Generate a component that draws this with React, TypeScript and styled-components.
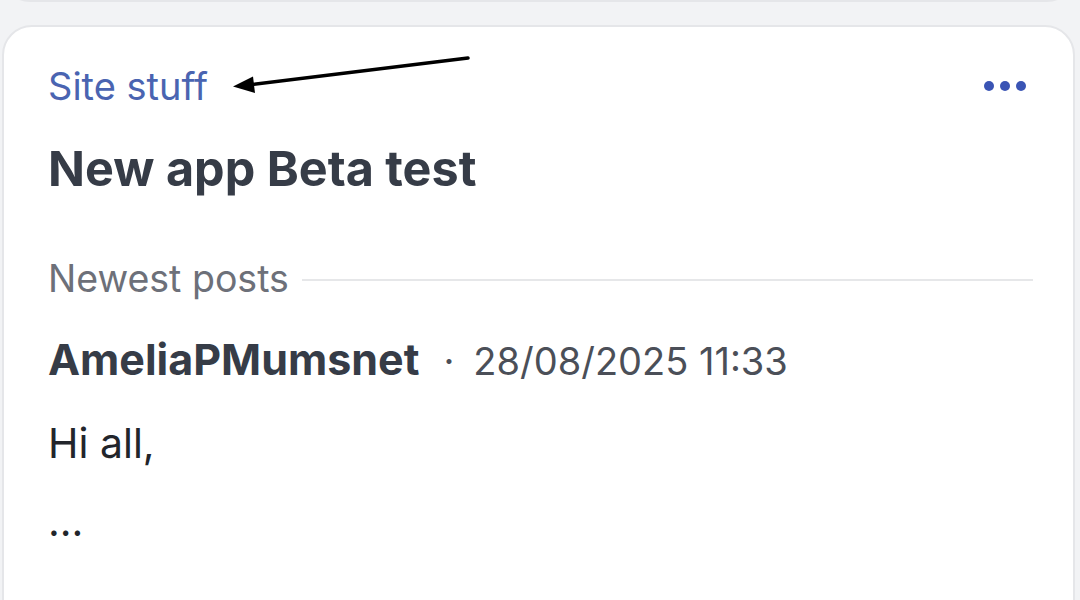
import React from "react";
import styled, { createGlobalStyle } from "styled-components";

const Global = createGlobalStyle`
  html, body {
    margin: 0;
    padding: 0;
    background: #f2f3f5;
    font-family: Inter, "Noto Sans", Roboto, sans-serif;
  }
  * { box-sizing: border-box; }
`;

const Page = styled.div`
  width: 1080px;
  height: 600px;
  overflow: hidden;
  background: #f2f3f5;
  display: flex;
  flex-direction: column;
  gap: 23px;
`;

const PrevCard = styled.div`
  flex-shrink: 0;
  margin-left: 2px;
  width: 1073px;
  height: 40px;
  margin-top: -38px;
  background: #ffffff;
  border: 2px solid #e5e6e9;
  border-radius: 0 0 28px 28px;
`;

const Card = styled.article`
  position: relative;
  flex-shrink: 0;
  margin-left: 2px;
  width: 1073px;
  min-height: 700px;
  background: #ffffff;
  border: 2px solid #e5e6e9;
  border-radius: 30px;
  padding: 36px 40px 0 44px;
  display: flex;
  flex-direction: column;
`;

const HeaderRow = styled.div`
  display: flex;
  align-items: center;
  justify-content: space-between;
`;

const Category = styled.a`
  font-size: 38px;
  line-height: 46px;
  color: #4a64b1;
  text-decoration: none;
`;

const MoreButton = styled.button`
  display: flex;
  gap: 6px;
  padding: 0;
  margin-right: 7px;
  border: none;
  background: none;
`;

const Dot = styled.span`
  width: 10px;
  height: 10px;
  border-radius: 50%;
  background: #3a54b4;
`;

const Title = styled.h2`
  margin: 31px 0 0;
  font-size: 48.5px;
  line-height: 58px;
  font-weight: 700;
  color: #363c47;
`;

const SectionRow = styled.div`
  margin-top: 58px;
  display: flex;
  align-items: center;
  gap: 13px;
`;

const SectionLabel = styled.span`
  font-size: 37.5px;
  line-height: 46px;
  color: #6d7079;
  white-space: nowrap;
`;

const Rule = styled.div`
  flex: 1;
  height: 2px;
  margin-top: 2px;
  background: #e6e7e9;
`;

const MetaRow = styled.div`
  margin-top: 31px;
  display: flex;
  align-items: baseline;
`;

const Author = styled.span`
  font-size: 43px;
  line-height: 52px;
  font-weight: 700;
  color: #363c47;
`;

const Sep = styled.span`
  margin: 0 19px 0 24px;
  font-size: 38px;
  color: #4b4f58;
`;

const DateText = styled.span`
  font-size: 38px;
  color: #4b4f58;
`;

const Body = styled.p<{ $gap: number }>`
  margin: ${(p) => p.$gap}px 0 0;
  font-size: 41px;
  line-height: 50px;
  color: #22252b;
`;

const Arrow = styled.svg`
  position: absolute;
  left: 220px;
  top: 20px;
  overflow: visible;
`;

export default function App() {
  return (
    <>
      <Global />
      <Page>
        <PrevCard />
        <Card>
          <HeaderRow>
            <Category href="#">Site stuff</Category>
            <MoreButton aria-label="More options">
              <Dot />
              <Dot />
              <Dot />
            </MoreButton>
          </HeaderRow>
          <Title>New app Beta test</Title>
          <SectionRow>
            <SectionLabel>Newest posts</SectionLabel>
            <Rule />
          </SectionRow>
          <MetaRow>
            <Author>AmeliaPMumsnet</Author>
            <Sep>·</Sep>
            <DateText>28/08/2025 11:33</DateText>
          </MetaRow>
          <Body $gap={33}>Hi all,</Body>
          <Body $gap={28}>...</Body>
          <Arrow width="260" height="50" viewBox="0 0 260 50">
            <line x1="244" y1="11" x2="24" y2="38" stroke="#000" strokeWidth="3.5" strokeLinecap="round" />
            <polygon points="9,39.5 29,29.5 31,46" fill="#000" />
          </Arrow>
        </Card>
      </Page>
    </>
  );
}
